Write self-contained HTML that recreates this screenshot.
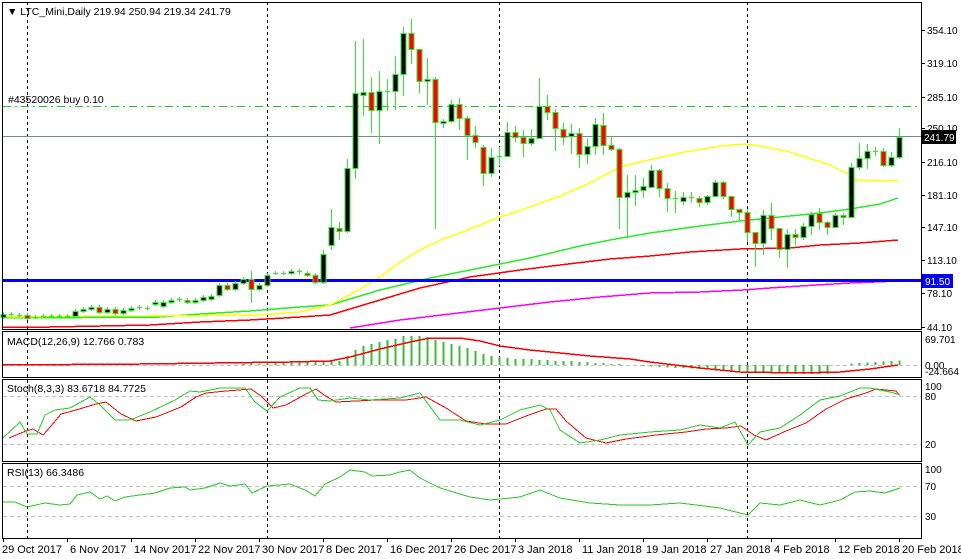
<!DOCTYPE html>
<html><head><meta charset="utf-8"><style>
html,body{margin:0;padding:0;background:#fff;}
svg{display:block;font-family:"Liberation Sans",sans-serif;}
</style></head><body>
<svg id="c" width="961" height="559" xmlns="http://www.w3.org/2000/svg" shape-rendering="crispEdges"></svg>
<script>
var s=document.getElementById('c'),h='';
function L(x1,y1,x2,y2,c,w,d){h+='<line x1="'+x1+'" y1="'+y1+'" x2="'+x2+'" y2="'+y2+'" stroke="'+c+'" stroke-width="'+(w||1)+'"'+(d?' stroke-dasharray="'+d+'"':'')+'/>';}
function P(pts,c,w,d){h+='<polyline fill="none" points="'+pts.map(function(p){return p.join(',')}).join(' ')+'" stroke="'+c+'" stroke-width="'+(w||1)+'"'+(d?' stroke-dasharray="'+d+'"':'')+'/>';}
function T(x,y,t,c,sz,anc){h+='<text x="'+x+'" y="'+y+'" fill="'+(c||'#000')+'" font-size="'+(sz||10.5)+'"'+(anc?' text-anchor="'+anc+'"':'')+'>'+t+'</text>';}
function R(x,y,w,hh,f,st){h+='<rect x="'+x+'" y="'+y+'" width="'+w+'" height="'+hh+'" fill="'+f+'"'+(st?' stroke="'+st+'"':'')+'/>';}
[27,267,499,747].forEach(function(x){L(x+.5,2,x+.5,538,'#000',1,'3,3');});
L(3,106.5,921,106.5,'#22cc22',1,'8,4,2,4');
L(3,136.5,921,136.5,'#778899',1);
P([[3,327],[50,327],[100,326],[150,325],[200,322],[250,320],[300,317],[330,315],[370,303],[420,288],[470,277],[520,270],[560,265],[610,259],[650,256],[690,252],[740,249],[790,248],[820,245],[860,243],[898,240]],'#ff0000',1.5);
P([[3,318],[160,317],[200,314],[250,311],[300,307],[330,305],[380,290],[430,278],[480,268],[530,258],[580,246],[610,240],[650,233],[700,226],[740,221],[780,217],[820,213],[850,209],[880,204],[898,198]],'#22ee22',1.5);
P([[3,317],[85,316],[150,316],[260,315],[300,312],[330,305],[340,300],[360,289],[380,277],[400,262],[420,250],[443,239],[460,233],[500,217],[530,207],[560,196],[590,183],[620,167],[640,162],[680,153],[720,146],[745,144],[760,146],[790,152],[830,165],[850,175],[855,180],[898,181]],'#ffff00',1.5);
P([[350,328],[400,320],[450,314],[500,308],[550,302],[600,297],[650,293],[700,292],[743,290],[770,288],[800,286],[850,283],[898,281]],'#ff00ff',1.5);
R(3,279,918,3,'#0000ff');
var C=[[3,314,317,'b'],[11,314,314,'d'],[19,315,315,'d'],[27,315,318,'r'],[35,317,317,'d'],[43,316,316,'d'],[51,316,316,'d'],[59,316,316,'d'],[67,316,316,'d'],[75,311,316,'b'],[83,309,311,'b'],[91,307,309,'b'],[99,307,312,'r'],[107,309,312,'b'],[115,309,313,'r'],[123,310,313,'b'],[131,308,310,'b'],[139,307,308,'d'],[147,308,308,'d'],[155,302,304,'b'],[163,302,306,'b'],[171,300,302,'b'],[179,299,300,'d'],[187,300,302,'r'],[195,300,302,'b'],[203,297,300,'b'],[211,296,299,'b'],[219,285,295,'b'],[227,285,289,'r'],[235,283,289,'b'],[243,279,283,'b'],[251,279,289,'r',271,303],[259,285,289,'b'],[267,275,285,'b'],[275,273,273,'d'],[283,273,273,'d'],[291,271,273,'b'],[299,271,273,'d'],[307,273,275,'r'],[315,275,282,'r'],[323,254,282,'b',250,284],
[331,227,245,'b',209,250],[339,228,231,'r',222,240],[347,168,231,'b',159,233],[355,93,168,'b',41,179],[363,92,95,'b',39,116],[371,92,110,'r',77,133],[379,91,110,'b',71,144],[387,91,92,'d',79,111],[395,74,91,'b',56,110],[403,33,74,'b',27,96],[411,33,49,'r',19,64],[419,49,81,'r',58,93],[427,79,81,'b',58,105],[435,79,122,'r',77,229],[443,121,123,'b',119,128],[451,104,121,'b',100,123],[459,104,118,'r',98,130],[467,118,135,'r',116,160],[475,135,142,'r',126,148],[483,147,173,'r',145,186],[491,157,173,'b',148,177],[499,156,156,'d',147,166],[507,132,156,'b',122,157],[515,132,137,'r',126,142],[523,137,143,'r',130,157],[531,138,143,'b',129,146],[539,106,138,'b',78,139],[547,106,112,'r',95,120],[555,112,128,'r',109,151],[563,129,137,'r',123,145],[571,133,136,'b',124,154],[579,133,154,'r',128,168],[587,146,154,'b',139,164],[595,124,146,'b',118,155],[603,125,145,'r',113,155],[611,145,149,'r',136,151],
[619,149,197,'r',148,229],[627,192,197,'b',175,238],[635,190,192,'b',175,206],[643,186,190,'b',178,198],[651,170,187,'b',165,188],[659,170,188,'r',169,197],[667,188,198,'r',183,212],[675,198,199,'d',191,213],[683,197,201,'b',192,205],[691,197,198,'d',192,203],[699,198,202,'r',196,207],[707,196,202,'b',195,205],[715,182,196,'b',180,197],[723,182,196,'r',181,199],[731,196,209,'r',196,217],[739,209,212,'r',209,220],[747,212,232,'r',209,242],[755,232,243,'r',232,267],[763,215,243,'b',210,255],[771,215,228,'r',203,240],[779,228,249,'r',228,258],[787,234,249,'b',229,268],[795,234,237,'r',229,245],[803,226,237,'b',223,240],[811,214,226,'b',212,235],[819,213,222,'r',208,230],[827,222,227,'r',221,235],[835,215,227,'b',213,228],[843,215,217,'r',213,225],[851,167,217,'b',163,218],[859,158,167,'b',143,170],[867,151,158,'b',144,169],[875,151,151,'d',147,156],[883,151,165,'r',148,167],[891,157,165,'b',152,167],[899,137,157,'b',128,159]];
C.forEach(function(c){var x=c[0],t=c[1],b=c[2],hi=c[4]||t-2,lo=c[5]||b+2;
 L(x+.5,hi,x+.5,lo,'#22ee22',1);
 if(c[3]=='d'){L(x-2,t+.5,x+3,t+.5,'#22ee22',1);}
 else{if(b-t<2)b=t+2;R(x-2.5+.5,t+.5,5,b-t,c[3]=='b'?'#000':'#ff0000','#22ee22');}
});
R(2.5,2.5,919,327,'none','#000');R(2.5,331.5,919,46,'none','#000');R(2.5,379.5,919,82,'none','#000');R(2.5,463.5,919,75,'none','#000');
T(7,15,'▼ LTC_Mini,Daily  219.94 250.94 219.34 241.79','#000',10.5);
T(8,103,'#43520026 buy 0.10','#000',10.5);
[['354.10',30],['319.10',63],['285.10',97],['250.10',128],['216.10',162],['181.10',195],['147.10',227],['113.10',260],['78.10',293],['44.10',327]].forEach(function(a){L(921,a[1]+.5,925,a[1]+.5,'#000');T(927,a[1]+4,a[0],'#000',10);});
R(922,130,34,14,'#000');T(924,141,'241.79','#fff',10);
R(922,274,31,14,'#0000ff');T(925,285,'91.50','#fff',10);
L(3,365.5,921,365.5,'#c0c0c0',1,'4,3');
for(var x=3;x<=899;x+=8){var v;
 if(x<210)v=0;else if(x<331)v=(x-210)/30;else{var tab={331:4,339:4,347:9,355:15,363:19,371:21,379:23,387:25,395:26,403:29,411:29,419:29,427:28,435:25,443:23,451:21,459:19,467:17,475:14,483:11,491:9,499:8,507:7,515:6,523:6,531:6,539:5,547:5,555:4,563:4,571:4,579:3,587:3,595:2,603:2,611:1,619:1};
 if(tab[x]!==undefined)v=tab[x];else if(x<830)v=-Math.min(9,(x-619)/20);else v=(x-830)/15;}
 if(Math.abs(v)>=1)L(x+.5,365,x+.5,365-v,'#3cb83c',2);}
P([[3,365],[140,364],[215,363],[290,362],[330,361],[350,357],[380,349],[410,342],[430,338],[460,338],[480,341],[500,346],[530,350],[560,353],[590,356],[630,359],[650,362],[700,368],[740,372],[800,373],[840,372],[870,369],[898,365]],'#ff0000',1.5);
T(7,345,'MACD(12,26,9) 12.766 0.783');
T(925,343,'69.701','#000',10);T(925,369,'0.00','#000',10);T(925,375,'-24.664','#000',10);
L(3,396.5,921,396.5,'#c0c0c0',1,'4,3');L(3,444.5,921,444.5,'#c0c0c0',1,'4,3');
var sg=[[3,438],[20,422],[27,434],[37,434],[45,415],[55,410],[70,408],[90,397],[100,405],[115,420],[130,420],[150,412],[175,400],[190,391],[200,392],[220,388],[245,388],[255,402],[267,411],[280,397],[300,388],[310,388],[318,400],[330,401],[350,398],[370,400],[400,398],[420,393],[440,420],[460,420],[480,425],[500,420],[520,410],[540,405],[550,410],[560,430],[580,443],[600,440],[620,435],[650,432],[680,430],[700,425],[720,428],[735,422],[748,445],[760,432],[780,428],[800,415],[820,400],[840,396],[860,388],[870,388],[890,392],[900,395]];
var sr=[];for(var i=0;i<sg.length;i++){var p=sg[i],q=sg[Math.max(0,i-1)];sr.push([p[0]+6,Math.round((p[1]+q[1])/2+(i>0?1:0))]);}sr[sr.length-1][0]=899;
P(sr,'#ff0000',1);P(sg,'#22cc22',1);
T(7,392,'Stoch(8,3,3) 83.6718 84.7725');
T(925,390,'100','#000',10);T(925,400,'80','#000',10);T(925,448,'20','#000',10);
L(3,486.5,921,486.5,'#c0c0c0',1,'4,3');L(3,516.5,921,516.5,'#c0c0c0',1,'4,3');
P([[3,502],[15,502],[27,507],[45,503],[60,505],[70,504],[77,495],[90,492],[100,499],[107,496],[115,501],[125,497],[140,495],[155,493],[170,488],[185,487],[190,490],[205,488],[220,483],[230,486],[245,484],[252,493],[267,486],[290,484],[305,490],[315,496],[325,484],[340,477],[350,470],[365,472],[372,476],[390,475],[400,472],[410,470],[420,478],[440,488],[470,497],[490,500],[520,497],[540,490],[560,498],[590,503],[620,505],[650,505],[680,503],[720,508],[748,515],[760,503],[780,505],[800,500],[820,505],[840,500],[855,492],[870,491],[885,493],[900,488]],'#22cc22',1);
T(7,476,'RSI(13) 66.3486');
T(925,473,'100','#000',10);T(925,490,'70','#000',10);T(925,520,'30','#000',10);
['29 Oct 2017','6 Nov 2017','14 Nov 2017','22 Nov 2017','30 Nov 2017','8 Dec 2017','16 Dec 2017','26 Dec 2017','3 Jan 2018','11 Jan 2018','19 Jan 2018','27 Jan 2018','4 Feb 2018','12 Feb 2018','20 Feb 2018'].forEach(function(d,i){var x=3+64*i;L(x+.5,538,x+.5,542,'#000');T(i==0?2:x+3,553,d,'#000',11);});
s.innerHTML=h;
</script>
</body></html>
